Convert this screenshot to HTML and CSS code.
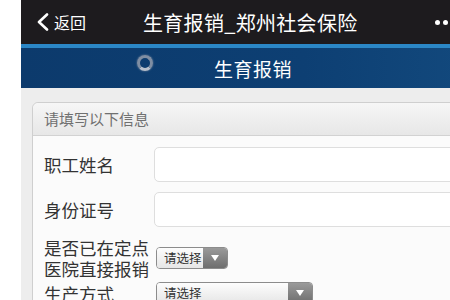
FILE: index.html
```html
<!DOCTYPE html>
<html>
<head>
  <meta charset="utf-8">
  <title>生育报销_郑州社会保险</title>
  <link rel="stylesheet" href="styles.css">
</head>
<body>
  <div class="phone">
    <div class="navbar">
      <div class="back">
        <svg width="14" height="18" viewBox="0 0 14 18"><polyline points="11,1.5 3,9 11,16.5" fill="none" stroke="#fff" stroke-width="2.6" stroke-linecap="round" stroke-linejoin="round"/></svg>
        <span>返回</span>
      </div>
      <div class="title">生育报销_郑州社会保险</div>
      <div class="dots"><i></i><i></i><i></i></div>
    </div>

    <div class="banner">
      <span class="ring"></span>
      <span class="banner-title">生育报销</span>
    </div>

    <div class="content">
      <div class="panel">
        <div class="panel-head">请填写以下信息</div>
        <div class="panel-body">
          <div class="row">
            <label>职工姓名</label>
            <div class="input"></div>
          </div>
          <div class="row">
            <label>身份证号</label>
            <div class="input"></div>
          </div>
          <div class="row row-tall">
            <label>是否已在定点<br>医院直接报销</label>
            <div class="select small"><span>请选择</span><b></b></div>
          </div>
          <div class="row row-select">
            <label>生产方式</label>
            <div class="select wide"><span>请选择</span><b></b></div>
          </div>
        </div>
      </div>
    </div>
  </div>
</body>
</html>
```

FILE: styles.css
```css
html, body { margin: 0; padding: 0; background: #fff; overflow: hidden; }
body { font-family: "Noto Sans CJK SC", "Noto Sans", sans-serif; }

.phone { margin-left: 21px; width: 470px; height: 300px; background: #ededed; }

.navbar { height: 44px; background: #1d1b1e; color: #fff; display: flex; align-items: center; }
.back { display: flex; align-items: center; padding-left: 15px; font-size: 16px; width: 107px; }
.back svg { margin-right: 4px; }
.title { font-size: 20px; letter-spacing: 0.3px; width: 292px; }
.dots { display: flex; gap: 3px; }
.dots i { width: 5px; height: 5px; border-radius: 50%; background: #fff; }

.banner { height: 44px; box-sizing: border-box; border-top: 4px solid #2b87c6; background: linear-gradient(90deg, #0c3a6c 0%, #0d3f73 60%, #134a7e 100%); display: flex; align-items: center; color: #fff; }
.ring { width: 10px; height: 10px; border-radius: 50%; border: 3px solid #7f8ea3; border-bottom-color: #b7c0cc; margin-left: 116px; margin-top: -10px; box-shadow: 0 0 2px #7f8ea3; }
.banner-title { font-size: 19px; margin-left: 61px; letter-spacing: 0.5px; }

.content { padding: 14px 0 0 11px; }
.panel { border: 1px solid #cfcfcf; border-radius: 6px; background: #fbfbfb; }
.panel-head { height: 32px; line-height: 32px; padding-left: 11px; font-size: 15px; color: #707070; background: linear-gradient(#f6f6f6, #e7e7e7); border-bottom: 1px solid #d2d2d2; border-radius: 6px 6px 0 0; }
.panel-body { padding: 11px 0 0 11px; }

.row { display: flex; align-items: center; margin-bottom: 10px; }
.row label { width: 110px; font-size: 17.5px; color: #333; line-height: 22px; }
.input { flex: 1; height: 33px; border: 1px solid #dedede; border-radius: 5px; background: #fff; }
.row-tall { margin-bottom: 3px; }
.row-tall label { line-height: 21px; }

.select { display: flex; height: 20px; border: 1px solid #8c8c8c; border-radius: 4px; overflow: hidden; font-size: 12.5px; color: #333; margin-left: 2px; }
.select span { flex: 1; padding-left: 7px; line-height: 20px; background: linear-gradient(#fdfdfd, #e6e6e6); }
.select b { width: 24px; background: linear-gradient(#9a9a9a, #6e6e6e); position: relative; }
.select b::after { content: ""; position: absolute; left: 8px; top: 7px; border-left: 4px solid transparent; border-right: 4px solid transparent; border-top: 6px solid #fff; }
.small { width: 70px; }
.wide { width: 155px; }
.row-select { align-items: flex-start; }
.row-select label { margin-top: 1px; }
```
